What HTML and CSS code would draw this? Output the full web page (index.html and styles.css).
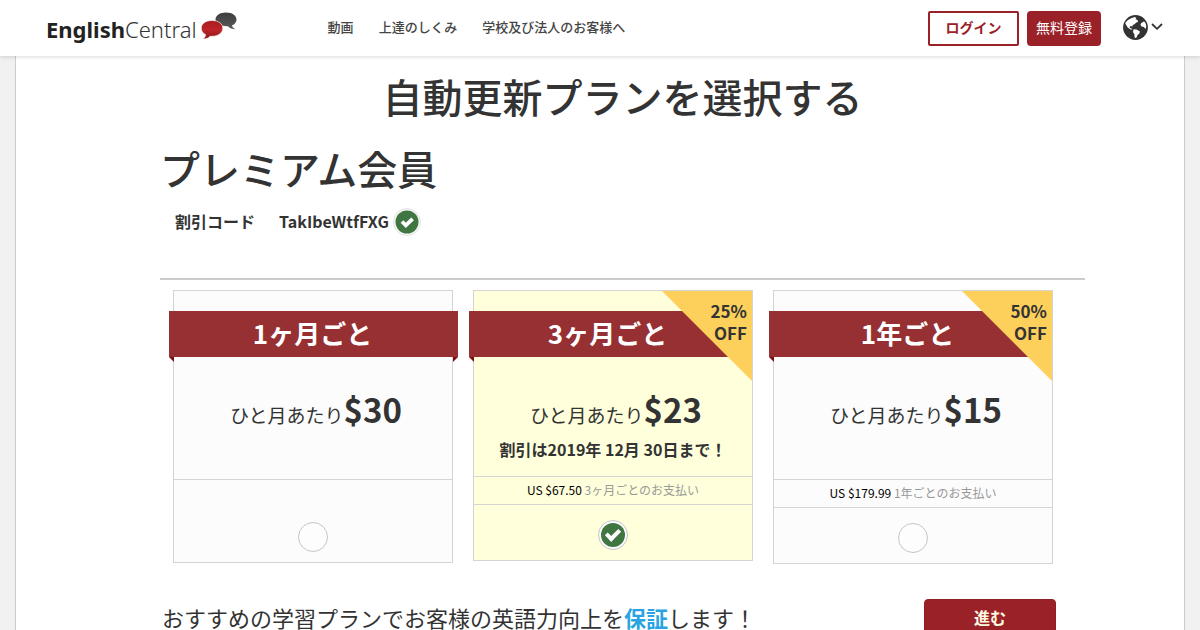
FILE: index.html
```html
<!DOCTYPE html>
<html lang="ja">
<head>
<meta charset="utf-8">
<meta name="viewport" content="width=device-width, initial-scale=1">
<title>EnglishCentral</title>
<link rel="stylesheet" href="styles.css">
</head>
<body>
<header class="site-header">
  <a class="logo" href="#" aria-label="EnglishCentral">
    <span class="logo-text"><b>English</b>Central</span>
    <svg class="logo-mark" width="36" height="32" viewBox="0 0 36 32" aria-hidden="true">
      <defs>
        <linearGradient id="dark" x1="0" y1="0" x2="0" y2="1"><stop offset="0" stop-color="#3d3d3d"/><stop offset="1" stop-color="#5a5a5a"/></linearGradient>
        <linearGradient id="red" x1="0" y1="0" x2="0" y2="1"><stop offset="0" stop-color="#a51c20"/><stop offset=".5" stop-color="#bd2428"/><stop offset="1" stop-color="#8e1a1d"/></linearGradient>
      </defs>
      <path fill="url(#dark)" d="M25 .5c6 0 10.500 2.800 10.500 7 0 2.700-1.800 4.800-4.500 5.900.4 1.600 1.600 2.900 3.500 3.800-3.500 0-6-1-7.500-3C20 14.500 14.500 12 14.500 7.500 14.500 3.300 19 .5 25 .5z"/>
      <path fill="url(#red)" stroke="#fff" stroke-width=".6" d="M11 8.500c6.200 0 10.800 3.200 10.800 7.700S17.200 24.300 11 24.300h-2c-1.300 1.800-3.700 2.700-7.200 2.600 1.800-1 2.700-2.400 2.800-4.300C1.800 21.300.3 18.800.3 16.200.3 11.700 4.800 8.500 11 8.500z"/>
    </svg>
  </a>
  <nav class="main-nav">
    <a href="#">動画</a>
    <a href="#">上達のしくみ</a>
    <a href="#">学校及び法人のお客様へ</a>
  </nav>
  <div class="account">
    <button class="btn btn-outline" type="button">ログイン</button>
    <button class="btn btn-solid" type="button">無料登録</button>
    <button class="language" type="button" aria-label="言語">
      <svg width="25" height="25" viewBox="0 0 25 25" aria-hidden="true">
        <circle cx="12.500" cy="12.500" r="12.400" fill="#333"/>
        <path fill="#fff" d="m8.200 3.200 3.600-1.300 1.600 1-1 1.200 2 .8.700 2-2 .5-1.300 1.600-1.900 1.100-.6 1.500-1.600-.5-1.300.8.8 1.200 1.800.6.300 1-2.100-.4-2.500-1.700-1.600-2.600-.9-1.900C3.500 6.100 5.600 4.300 8.200 3.200z"/>
        <path fill="#fff" d="m10.600 14.300 3 .2 3.300 1.900-.7 2.300-1.700 1.200-.8 2.300-1.200.8-.9-.6-.2-3.200-1.500-2.100z"/>
        <path fill="#fff" d="m18.300 8 2.500-1.600 1.300.8c.8 1.500 1.200 3 1.200 4.700l-.9 2-1.500-1.900-2.300-.4-1.200-1.700z"/>
      </svg>
      <svg width="12" height="8" viewBox="0 0 12 8" aria-hidden="true"><path d="m1 1 5 4.800L11 1" fill="none" stroke="#333" stroke-width="1.800"/></svg>
    </button>
  </div>
</header>

<main class="page">
  <h1 class="page-title">自動更新プランを選択する</h1>
  <h2 class="tier">プレミアム会員</h2>
  <div class="coupon">
    <span>割引コード</span>
    <span class="coupon-code">TakIbeWtfFXG
      <svg width="28" height="30" viewBox="0 0 28 30" aria-hidden="true"><circle cx="14" cy="16" r="13.500" fill="#f7f7f7" stroke="#e3e3e3"/><circle cx="14" cy="16" r="11.500" fill="#3f7642"/><path d="m9 15.500 3.800 3.800 6.800-6.500" fill="none" stroke="#fff" stroke-width="3.800"/></svg>
    </span>
  </div>

  <form class="plan-form">
    <div class="plans">
      <section class="plan">
        <h3 class="ribbon">1ヶ月ごと</h3>
        <div class="offer"><p class="price">ひと月あたり<b>$30</b></p></div>
        <label class="choice choice-tall"><input type="radio" name="plan" aria-label="1ヶ月ごと"></label>
      </section>
      <section class="plan plan-selected">
        <h3 class="ribbon ribbon-cut">3ヶ月ごと</h3>
        <div class="discount">25%<br>OFF</div>
        <div class="offer offer-deadline"><p class="price">ひと月あたり<b>$23</b></p><p class="deadline">割引は2019年 12月 30日まで！</p></div>
        <p class="billing"><span>US $67.50</span> 3ヶ月ごとのお支払い</p>
        <label class="choice"><input type="radio" name="plan" aria-label="3ヶ月ごと" checked></label>
      </section>
      <section class="plan">
        <h3 class="ribbon ribbon-cut">1年ごと</h3>
        <div class="discount">50%<br>OFF</div>
        <div class="offer"><p class="price">ひと月あたり<b>$15</b></p></div>
        <p class="billing"><span>US $179.99</span> 1年ごとのお支払い</p>
        <label class="choice"><input type="radio" name="plan" aria-label="1年ごと"></label>
      </section>
    </div>
    <div class="proceed">
      <p class="guarantee">おすすめの学習プランでお客様の英語力向上を<a href="#">保証</a>します！</p>
      <button class="btn-proceed" type="submit">進む</button>
    </div>
  </form>
</main>
</body>
</html>
```

FILE: styles.css
```css
*,
*::before,
*::after {
  box-sizing: border-box;
}

body {
  margin: 0;
  background: #f1f1f1;
  color: #333;
  font-family: "Noto Sans CJK JP", sans-serif;
  font-size: 16px;
}

h1, h2, h3, p {
  margin: 0;
}

button {
  font-family: inherit;
  cursor: pointer;
}

/* Header */
.site-header {
  position: relative;
  display: flex;
  align-items: center;
  height: 56px;
  padding: 0 37px 0 46px;
  background: #fff;
  box-shadow: 0 1px 4px rgba(0, 0, 0, 0.15);
}

.logo {
  display: flex;
  align-items: center;
  gap: 4px;
  color: #333;
  text-decoration: none;
}

.logo-text {
  font-family: "Noto Sans", sans-serif;
  font-size: 22px;
  font-weight: 300;
  line-height: 30px;
  padding-top: 2px;
}

.logo-text b {
  font-weight: 700;
  color: #222;
}

.main-nav {
  display: flex;
  gap: 25px;
  margin-left: 91px;
  padding-bottom: 2px;
}

.main-nav a {
  color: #444;
  font-size: 13px;
  font-weight: 500;
  line-height: 20px;
  text-decoration: none;
}

.account {
  display: flex;
  align-items: center;
  gap: 8px;
  margin-left: auto;
}

.btn {
  height: 35px;
  padding: 0 7px 2px;
  border: 2px solid #9b2128;
  border-radius: 4px;
  font-size: 14px;
  line-height: 20px;
}

.btn-outline {
  min-width: 91px;
  border-radius: 2px;
  background: #fff;
  color: #9b2128;
  font-weight: 700;
}

.btn-solid {
  background: #9b2128;
  color: #fff;
}

.language {
  display: flex;
  align-items: center;
  gap: 3px;
  margin-left: 14px;
  padding: 0 0 2px;
  border: 0;
  background: none;
}

/* Page */
.page {
  max-width: 1170px;
  margin: 0 auto;
  padding: 14px 99px 24px 144px;
  border: solid #ccc;
  border-width: 0 1px;
  background: #fff;
}

.page-title {
  font-size: 40px;
  font-weight: 500;
  line-height: 52px;
  text-align: center;
}

.tier {
  margin-top: 20px;
  font-size: 40px;
  font-weight: 500;
  line-height: 52px;
}

.coupon {
  display: flex;
  align-items: center;
  gap: 24px;
  margin-top: 12px;
  padding-left: 15px;
  font-weight: 700;
  line-height: 28px;
}

.coupon-code {
  display: flex;
  align-items: center;
  gap: 4px;
}

/* Plans */
.plan-form {
  margin-top: 42px;
  border-top: 2px solid #ccc;
}

.plans {
  display: grid;
  grid-template-columns: repeat(3, 1fr);
  align-items: start;
  gap: 20px;
  padding: 10px 32px 0 13px;
}

.plan {
  position: relative;
  padding-top: 20px;
  border: 1px solid #d4d4d0;
  background: #fcfcfc;
}

.plan-selected {
  background: #ffffdb;
}

.ribbon {
  position: relative;
  height: 46px;
  margin: 0 -6px 0 -5px;
  padding-right: 2px;
  background: #973032;
  color: #fff;
  font-size: 26px;
  font-weight: 700;
  line-height: 44px;
  text-align: center;
}

.ribbon::before,
.ribbon::after {
  content: "";
  position: absolute;
  top: 100%;
  left: 0;
  border-top: 5px solid #7d0e12;
  border-left: 5px solid transparent;
}

.ribbon::after {
  right: 0;
  left: auto;
  border-right: 5px solid transparent;
  border-left: 0;
}

.ribbon-cut {
  margin-right: 0;
  padding-right: 6px;
}

.ribbon-cut::after {
  display: none;
}

.discount {
  position: absolute;
  top: 0;
  right: 0;
  width: 90px;
  height: 90px;
  padding: 9px 5px 0 0;
  background: #fdd05c;
  clip-path: polygon(0 0, 100% 0, 100% 100%);
  font-size: 17px;
  font-weight: 700;
  line-height: 22px;
  text-align: right;
}

.offer {
  min-height: 122px;
  padding-top: 26px;
  text-align: center;
}

.offer-deadline {
  min-height: 119px;
}

.price {
  padding-left: 6px;
  font-size: 19px;
  line-height: 52px;
}

.price b {
  font-size: 33px;
}

.deadline {
  font-weight: 700;
  line-height: 24px;
  margin-top: -4px;
}

.billing {
  padding-bottom: 2px;
  border-top: 1px solid #d4d4d0;
  color: #999;
  font-size: 12px;
  line-height: 25px;
  text-align: center;
}

.billing span {
  color: #000;
}

.choice {
  display: flex;
  justify-content: center;
  padding: 15px 0 10px;
  border-top: 1px solid #d4d4d0;
}

.choice-tall {
  padding-top: 42px;
}

.choice input {
  position: relative;
  width: 30px;
  height: 30px;
  margin: 0;
  border: 1px solid #c5c5c5;
  border-radius: 50%;
  background: #fdfdfd;
  appearance: none;
}

.choice input:checked::before {
  content: "";
  position: absolute;
  inset: 2px;
  border-radius: 50%;
  background: #3f7642;
}

.choice input:checked::after {
  content: "";
  position: absolute;
  top: 8px;
  left: 7px;
  width: 14px;
  height: 9px;
  border: solid #fff;
  border-width: 0 0 4px 4px;
  transform: rotate(-45deg);
}

/* Proceed */
.proceed {
  display: flex;
  align-items: center;
  justify-content: space-between;
  margin-top: 35px;
  padding: 0 29px 0 2px;
}

.guarantee {
  font-size: 22px;
  line-height: 36px;
  padding-bottom: 2px;
}

.guarantee a {
  color: #29a3e2;
  font-weight: 700;
  text-decoration: none;
}

.btn-proceed {
  width: 132px;
  height: 38px;
  padding: 0 0 2px;
  border: 1px solid #8c2027;
  border-radius: 4px;
  background: #9b2128;
  color: #fffbe0;
  font-size: 16px;
  font-weight: 700;
}
```
